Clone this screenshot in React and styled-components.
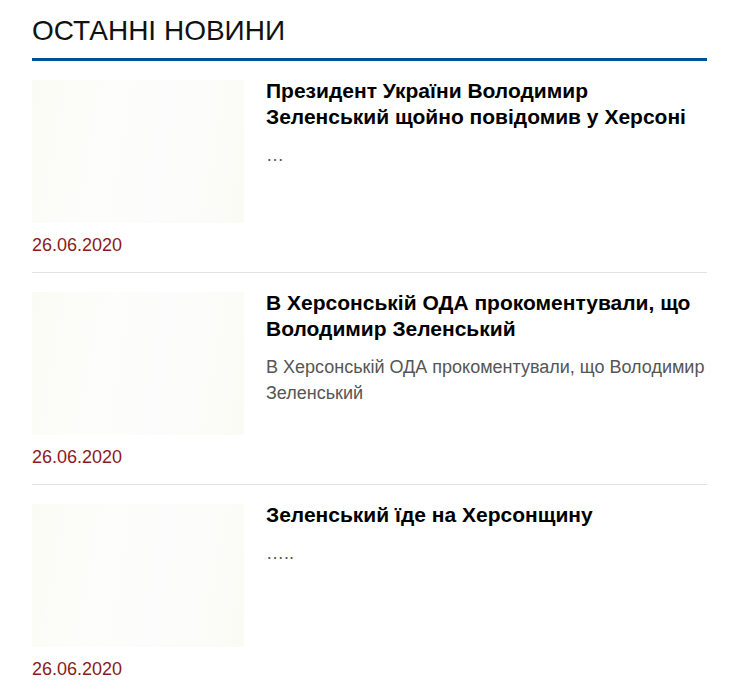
import styled, { createGlobalStyle } from "styled-components";

const GlobalStyle = createGlobalStyle`
    body {
        margin: 0;
        background: #fff;
        font-family: "Liberation Sans", Arial, sans-serif;
    }
`;

const Section = styled.section`
    width: 675px;
    margin: 0 auto 0 32px;
`;

const Heading = styled.h2`
    margin: 0;
    padding-top: 15px;
    padding-bottom: 11px;
    font-size: 28px;
    font-weight: 400;
    line-height: 32px;
    color: #111;
    border-bottom: 3px solid #00508f;
`;

const List = styled.div`
    display: flex;
    flex-direction: column;
`;

const Item = styled.article`
    display: grid;
    grid-template-columns: 212px 1fr;
    column-gap: 22px;
    padding: 19px 0 16px;
    border-bottom: ${props => (props.$last ? "none" : "1px solid #e3e3e3")};
`;

const Side = styled.div`
    display: flex;
    flex-direction: column;
`;

const Thumb = styled.div`
    width: 212px;
    height: 143px;
    background: linear-gradient(100deg, #fbfbf5 0%, #fdfdfb 35%, #fcfcfc 60%, #fbfbf5 100%);
`;

const DateText = styled.time`
    margin-top: 11px;
    font-size: 18px;
    line-height: 22px;
    color: #8b1a1d;
`;

const Body = styled.div`
    margin-top: -2px;
`;

const Title = styled.h3`
    margin: 0;
    font-size: 21px;
    font-weight: 700;
    line-height: 26px;
    color: #000;
`;

const Lead = styled.p`
    margin: 12px 0 0;
    font-size: 18px;
    line-height: 26px;
    color: #555;
`;

const news = [
    {
        title: "Президент України Володимир Зеленський щойно повідомив у Херсоні",
        lead: "…",
        date: "26.06.2020",
    },
    {
        title: "В Херсонській ОДА прокоментували, що Володимир Зеленський",
        lead: "В Херсонській ОДА прокоментували, що Володимир Зеленський",
        date: "26.06.2020",
    },
    {
        title: "Зеленський їде на Херсонщину",
        lead: "…..",
        date: "26.06.2020",
    },
];

function App() {
    return (
        <>
            <GlobalStyle />
            <Section>
                <Heading>ОСТАННІ НОВИНИ</Heading>
                <List>
                    {news.map((n, i) => (
                        <Item key={i} $last={i === news.length - 1}>
                            <Side>
                                <Thumb />
                                <DateText>{n.date}</DateText>
                            </Side>
                            <Body>
                                <Title>{n.title}</Title>
                                <Lead>{n.lead}</Lead>
                            </Body>
                        </Item>
                    ))}
                </List>
            </Section>
        </>
    );
}

export default App;
